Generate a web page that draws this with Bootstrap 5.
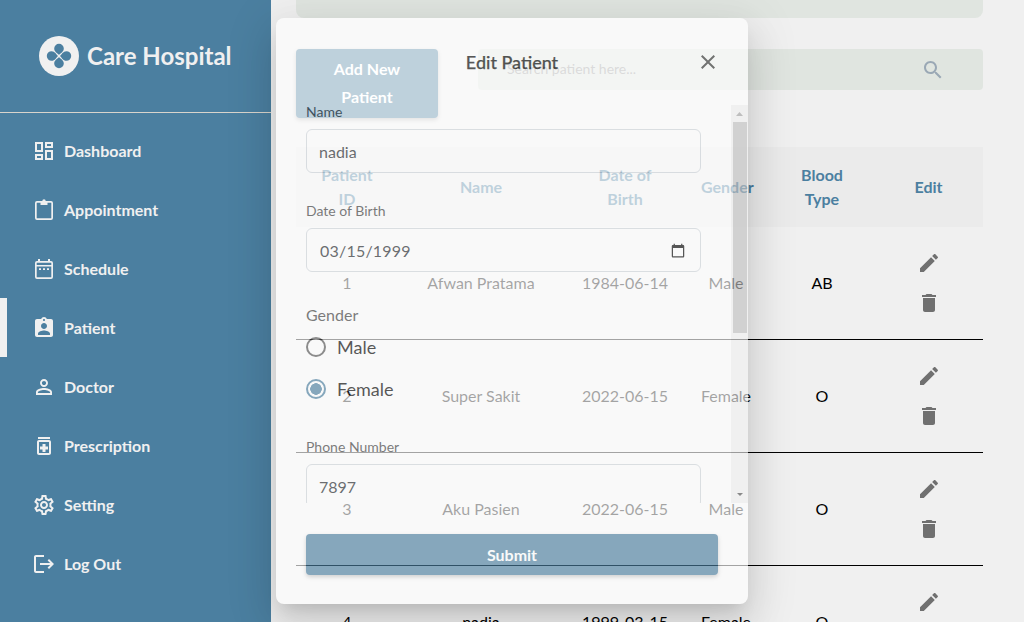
<!DOCTYPE html>
<html lang="en">
<head>
  <meta charset="UTF-8" />
  <meta name="viewport" content="width=device-width, initial-scale=1.0"/>
  <title>Care Hospital</title>
  <link rel="stylesheet" href="https://cdn.jsdelivr.net/npm/bootstrap@5.3.2/dist/css/bootstrap.min.css">
  <style>
    html, body { height: 100%; }
    body {
      background-color: #f0f0f0;
      color: #000;
      font-family: Lato, "Liberation Sans", sans-serif;
      font-size: 16px;
      overflow: hidden;
    }
    svg { fill: currentColor; flex-shrink: 0; }

    .side-bar { width: 271px; background-color: #4b7fa0; color: #f0f0f0; flex-shrink: 0; }
    .brand-row { height: 113px; padding-left: 39px; border-bottom: 1px solid #d9d4cc; }
    .brand-name { font-size: 24px; font-weight: 700; }
    .side-list { padding-top: 8px; }
    .side-link {
      height: 59px;
      padding-left: 25px;
      border-left: 7px solid transparent;
      color: #f0f0f0;
      font-weight: 700;
      text-decoration: none;
    }
    .side-link.active-link { border-left-color: #f0f0f0; }

    .main-area { padding: 0 41px 0 25px; min-width: 0; }
    .top-strip { height: 18px; background-color: #e0e5e0; border-radius: 0 0 8px 8px; margin-bottom: 31px; }
    .tool-row { height: 69px; margin-bottom: 29px; }
    .add-btn {
      width: 142px;
      height: 69px;
      padding: 5px 16px 7px;
      background-color: #4b7fa0;
      color: #fff;
      font-weight: 700;
      line-height: 28px;
      border: 0;
      border-radius: 4px;
      box-shadow: 0 2px 4px rgba(0, 0, 0, .25);
    }
    .search-box { height: 41px; margin-left: 40px; padding: 0 38px 0 27px; background-color: #e0e5e0; border-radius: 4px; color: #9aa8b5; }
    .search-input { background: transparent; border: 0; outline: 0; font-size: 14px; margin-bottom: 2px; }
    .search-input::placeholder { color: #9a9a9a; }

    .patient-table { table-layout: fixed; width: 687px; margin: 0; --bs-table-bg: transparent; --bs-table-color: #000; }
    .patient-table th {
      padding: 16px;
      background-color: #ebebeb;
      color: #4b7fa0;
      font-weight: 700;
      line-height: 24px;
      border: 0;
      text-align: center;
      vertical-align: middle;
    }
    .patient-table th:nth-child(4) { padding-left: 15px; }
    .patient-table th:last-child { padding-right: 20px; }
    .patient-table td {
      padding: 16px 8px;
      line-height: 24px;
      text-align: center;
      vertical-align: middle;
      border-bottom: 1px solid #000;
    }
    .patient-table td:last-child { padding-right: 12px; }
    .c-id { width: 102px; }
    .c-name { width: 166px; }
    .c-dob { width: 122px; }
    .c-gender { width: 80px; }
    .c-blood { width: 112px; }
    .icon-btn { display: block; margin: 0 auto; padding: 8px; width: 40px; height: 40px; border: 0; background: none; color: #707070; line-height: 0; }

    .edit-dialog {
      position: absolute;
      top: 18px;
      left: 276px;
      width: 472px;
      height: 586px;
      opacity: .64;
      background-color: #fff;
      border: 0;
      border-radius: 8px;
      box-shadow: 0 11px 15px -7px rgba(0, 0, 0, .2), 0 24px 38px 3px rgba(0, 0, 0, .14), 0 9px 46px 8px rgba(0, 0, 0, .12);
    }
    .edit-dialog .modal-header { height: 87px; padding: 0 28px; border: 0; flex-shrink: 0; }
    .header-spacer { width: 24px; }
    .edit-title { font-size: 18px; font-weight: 500; color: #000; margin: 2px 0 0; -webkit-text-stroke: .25px #000; }
    .x-btn { padding: 0; border: 0; background: none; color: #333; line-height: 0; }
    .scroll-part { height: 398px; overflow: hidden; flex-shrink: 0; }
    .form-part { width: 425px; padding-left: 30px; height: 398px; overflow: hidden; }
    .field-label { display: block; font-size: 14px; line-height: 15px; margin-top: -1px; margin-bottom: 10px; color: #3a3a3a; }
    .field-input {
      width: 395px;
      height: 44px;
      margin-bottom: 31px;
      padding: 8px 12px;
      font-family: Lato, "Liberation Sans", sans-serif;
      font-size: 16px;
      color: #212529;
      border-color: #ced4da;
      border-radius: 6px;
    }
    .field-input[type="date"] { padding: 9px 12px 7px 13px; letter-spacing: .2px; }
    .gender-label { line-height: 24px; color: #3a3a3a; margin-bottom: -1px; }
    .radio-row { height: 42px; margin: 0; padding: 0; gap: 11px; }
    .radio-row .form-check-input {
      float: none;
      width: 20px;
      height: 20px;
      margin: 0;
      flex-shrink: 0;
      background-color: #fff;
      border: 2px solid #555;
    }
    .radio-row .form-check-input:checked {
      background-image: radial-gradient(circle, #4b7fa0 0 5.5px, transparent 6px);
      border-color: #4b7fa0;
    }
    .radio-row .form-check-label { font-size: 18px; color: #000; }
    .radio-group { margin-bottom: 30px; }

    .bar-track { width: 17px; height: 398px; margin-left: auto; background-color: #f1f1f1; }
    .bar-arrow { height: 17px; color: #a3a3a3; }
    .bar-arrow.low-arrow { color: #505050; }
    .bar-thumb { width: 14px; height: 211px; margin: 0 auto; background-color: #c1c1c1; }

    .edit-dialog .modal-footer { display: block; padding: 31px 30px 29px; border: 0; }
    .submit-btn {
      display: block;
      width: 412px;
      height: 41px;
      margin: 0;
      padding: 6px 16px;
      background-color: #4b7fa0;
      color: #fff;
      font-weight: 700;
      line-height: 30px;
      border: 0;
      border-radius: 4px;
      box-shadow: 0 2px 4px rgba(0, 0, 0, .25);
    }
  </style>
</head>
<body class="d-flex">

<!-- Sidebar -->
<aside class="side-bar d-flex flex-column">
  <div class="brand-row d-flex align-items-center gap-2">
    <svg width="40" height="40" viewBox="-20 -20 40 40">
      <circle r="20" fill="#f0f0f0"/>
      <g fill="#4b7fa0">
        <path d="M0-.9C-1.4-2.6-4.8-4-4.8-7.4a4.8 4.8 0 0 1 9.6 0C4.8-4 1.4-2.6 0-.9z"/>
        <path transform="rotate(90)" d="M0-.9C-1.4-2.6-4.8-4-4.8-7.4a4.8 4.8 0 0 1 9.6 0C4.8-4 1.4-2.6 0-.9z"/>
        <path transform="rotate(180)" d="M0-.9C-1.4-2.6-4.8-4-4.8-7.4a4.8 4.8 0 0 1 9.6 0C4.8-4 1.4-2.6 0-.9z"/>
        <path transform="rotate(270)" d="M0-.9C-1.4-2.6-4.8-4-4.8-7.4a4.8 4.8 0 0 1 9.6 0C4.8-4 1.4-2.6 0-.9z"/>
      </g>
    </svg>
    <span class="brand-name">Care Hospital</span>
  </div>
  <nav class="side-list d-flex flex-column">
    <a href="#" class="side-link d-flex align-items-center gap-2">
      <svg width="24" height="24" viewBox="0 0 24 24"><path d="M19 5v2h-4V5h4M9 5v6H5V5h4m10 8v6h-4v-6h4M9 17v2H5v-2h4M21 3h-8v6h8V3zM11 3H3v10h8V3zm10 8h-8v10h8V11zm-10 4H3v6h8v-6z"/></svg>
      Dashboard
    </a>
    <a href="#" class="side-link d-flex align-items-center gap-2">
      <svg width="24" height="24" viewBox="0 0 24 24"><path fill-rule="evenodd" d="M5 3h14a2 2 0 0 1 2 2v15a2 2 0 0 1-2 2H5a2 2 0 0 1-2-2V5a2 2 0 0 1 2-2zm0 1.7a.3.3 0 0 0-.3.3v15c0 .17.13.3.3.3h14a.3.3 0 0 0 .3-.3V5a.3.3 0 0 0-.3-.3z"/><path d="M8.5 7V3h1.8a1.7 1.7 0 0 1 3.4 0h1.8v4z"/></svg>
      Appointment
    </a>
    <a href="#" class="side-link d-flex align-items-center gap-2">
      <svg width="24" height="24" viewBox="0 0 24 24"><path fill-rule="evenodd" d="M6 2h2v2h8V2h2v2h1a2 2 0 0 1 2 2v14a2 2 0 0 1-2 2H5a2 2 0 0 1-2-2V6a2 2 0 0 1 2-2h1zM4.7 9.5V20c0 .17.13.3.3.3h14a.3.3 0 0 0 .3-.3V9.5zm0-1.6h14.6V6a.3.3 0 0 0-.3-.3H5a.3.3 0 0 0-.3.3z"/><path d="M7 11.3h2v1.6H7zm4 0h2v1.6h-2zm4 0h2v1.6h-2z"/></svg>
      Schedule
    </a>
    <a href="#" class="side-link active-link d-flex align-items-center gap-2">
      <svg width="24" height="24" viewBox="0 0 24 24"><path d="M19 3h-4.18C14.4 1.84 13.3 1 12 1c-1.3 0-2.4.84-2.82 2H5c-1.1 0-2 .9-2 2v14c0 1.1.9 2 2 2h14c1.1 0 2-.9 2-2V5c0-1.1-.9-2-2-2zm-7 0c.55 0 1 .45 1 1s-.45 1-1 1-1-.45-1-1 .45-1 1-1zm0 4c1.66 0 3 1.34 3 3s-1.34 3-3 3-3-1.34-3-3 1.34-3 3-3zm6 12H6v-1.4c0-2 4-3.1 6-3.1s6 1.1 6 3.1V19z"/></svg>
      Patient
    </a>
    <a href="#" class="side-link d-flex align-items-center gap-2">
      <svg width="24" height="24" viewBox="0 0 24 24"><path d="M12 5.9c1.16 0 2.1.94 2.1 2.1s-.94 2.1-2.1 2.1S9.9 9.16 9.9 8s.94-2.1 2.1-2.1m0 9c2.97 0 6.1 1.46 6.1 2.1v1.1H5.9V17c0-.64 3.13-2.1 6.1-2.1M12 4C9.79 4 8 5.79 8 8s1.79 4 4 4 4-1.79 4-4-1.79-4-4-4zm0 9c-2.67 0-8 1.34-8 4v3h16v-3c0-2.66-5.33-4-8-4z"/></svg>
      Doctor
    </a>
    <a href="#" class="side-link d-flex align-items-center gap-2">
      <svg width="24" height="24" viewBox="0 0 24 24"><path d="M6 3h12v2H6zm11 3H7c-1.1 0-2 .9-2 2v11c0 1.1.9 2 2 2h10c1.1 0 2-.9 2-2V8c0-1.1-.9-2-2-2zm0 13H7V8h10v11zm-6.5-1h3v-2.5H16v-3h-2.5V10h-3v2.5H8v3h2.5z"/></svg>
      Prescription
    </a>
    <a href="#" class="side-link d-flex align-items-center gap-2">
      <svg width="24" height="24" viewBox="0 0 24 24"><path d="M19.43 12.98c.04-.32.07-.64.07-.98 0-.34-.03-.66-.07-.98l2.11-1.65c.19-.15.24-.42.12-.64l-2-3.46c-.09-.16-.26-.25-.44-.25-.06 0-.12.01-.17.03l-2.49 1c-.52-.4-1.08-.73-1.69-.98l-.38-2.65C14.46 2.18 14.25 2 14 2h-4c-.25 0-.46.18-.49.42l-.38 2.65c-.61.25-1.17.59-1.69.98l-2.49-1c-.06-.02-.12-.03-.18-.03-.17 0-.34.09-.43.25l-2 3.46c-.13.22-.07.49.12.64l2.11 1.65c-.04.32-.07.65-.07.98 0 .33.03.66.07.98l-2.11 1.65c-.19.15-.24.42-.12.64l2 3.46c.09.16.26.25.44.25.06 0 .12-.01.17-.03l2.49-1c.52.4 1.08.73 1.69.98l.38 2.65c.03.24.24.42.49.42h4c.25 0 .46-.18.49-.42l.38-2.65c.61-.25 1.17-.59 1.69-.98l2.49 1c.06.02.12.03.18.03.17 0 .34-.09.43-.25l2-3.46c.12-.22.07-.49-.12-.64l-2.11-1.65zm-1.98-1.71c.04.31.05.52.05.73 0 .21-.02.43-.05.73l-.14 1.13.89.7 1.08.84-.7 1.21-1.27-.51-1.04-.42-.9.68c-.43.32-.84.56-1.25.73l-1.06.43-.16 1.13-.2 1.35h-1.4l-.19-1.35-.16-1.13-1.06-.43c-.43-.18-.83-.41-1.23-.71l-.91-.7-1.06.43-1.27.51-.7-1.21 1.08-.84.89-.7-.14-1.13c-.03-.31-.05-.54-.05-.74s.02-.43.05-.73l.14-1.13-.89-.7-1.08-.84.7-1.21 1.27.51 1.04.42.9-.68c.43-.32.84-.56 1.25-.73l1.06-.43.16-1.13.2-1.35h1.39l.19 1.35.16 1.13 1.06.43c.43.18.83.41 1.23.71l.91.7 1.06-.43 1.27-.51.7 1.21-1.07.85-.89.7.14 1.13zM12 8c-2.21 0-4 1.79-4 4s1.79 4 4 4 4-1.79 4-4-1.79-4-4-4zm0 6c-1.1 0-2-.9-2-2s.9-2 2-2 2 .9 2 2-.9 2-2 2z"/></svg>
      Setting
    </a>
    <a href="#" class="side-link d-flex align-items-center gap-2">
      <svg width="24" height="24" viewBox="0 0 24 24"><path d="M17 7l-1.41 1.41L18.17 11H8v2h10.17l-2.58 2.58L17 17l5-5zM4 5h8V3H4c-1.1 0-2 .9-2 2v14c0 1.1.9 2 2 2h8v-2H4V5z"/></svg>
      Log Out
    </a>
  </nav>
</aside>

<!-- Main content -->
<main class="main-area flex-grow-1">
  <div class="top-strip"></div>
  <div class="tool-row d-flex align-items-start">
    <button class="add-btn flex-shrink-0">Add New Patient</button>
    <div class="search-box flex-grow-1 d-flex align-items-center justify-content-between">
      <input class="search-input flex-grow-1" type="text" placeholder="Search patient here...">
      <svg width="24" height="24" viewBox="0 0 24 24"><path d="M15.5 14h-.79l-.28-.27C15.41 12.59 16 11.11 16 9.5 16 5.91 13.09 3 9.5 3S3 5.91 3 9.5 5.91 16 9.5 16c1.61 0 3.09-.59 4.23-1.57l.27.28v.79l5 4.99L20.49 19l-4.99-5zm-6 0C7.01 14 5 11.99 5 9.5S7.01 5 9.5 5 14 7.01 14 9.5 11.99 14 9.5 14z"/></svg>
    </div>
  </div>

  <table class="table patient-table">
    <colgroup>
      <col class="c-id"><col class="c-name"><col class="c-dob"><col class="c-gender"><col class="c-blood"><col>
    </colgroup>
    <thead>
      <tr>
        <th>Patient ID</th>
        <th>Name</th>
        <th>Date of Birth</th>
        <th>Gender</th>
        <th class="px-4">Blood Type</th>
        <th>Edit</th>
      </tr>
    </thead>
    <tbody id="patientRows"></tbody>
  </table>
</main>

<!-- Edit dialog -->
<div class="modal-content edit-dialog">
  <div class="modal-header d-flex align-items-center justify-content-between">
    <span class="header-spacer"></span>
    <h5 class="edit-title">Edit Patient</h5>
    <button class="x-btn" aria-label="Close">
      <svg width="24" height="24" viewBox="0 0 24 24"><path d="M19 6.41L17.59 5 12 10.59 6.41 5 5 6.41 10.59 12 5 17.59 6.41 19 12 13.41 17.59 19 19 17.59 13.41 12z"/></svg>
    </button>
  </div>
  <div class="scroll-part d-flex">
    <form class="form-part">
      <label class="field-label">Name</label>
      <input class="form-control field-input" type="text" value="nadia">
      <label class="field-label">Date of Birth</label>
      <input class="form-control field-input" type="date" value="1999-03-15">
      <div class="gender-label">Gender</div>
      <div class="radio-group">
        <div class="form-check radio-row d-flex align-items-center">
          <input class="form-check-input" type="radio" name="gender" id="gMale">
          <label class="form-check-label" for="gMale">Male</label>
        </div>
        <div class="form-check radio-row d-flex align-items-center">
          <input class="form-check-input" type="radio" name="gender" id="gFemale" checked>
          <label class="form-check-label" for="gFemale">Female</label>
        </div>
      </div>
      <label class="field-label">Phone Number</label>
      <input class="form-control field-input" type="text" value="7897">
    </form>
    <div class="bar-track d-flex flex-column justify-content-between">
      <div>
        <div class="bar-arrow d-flex align-items-center justify-content-center">
          <svg width="7" height="4" viewBox="0 0 7 4"><path d="M3.5 0L7 4H0z"/></svg>
        </div>
        <div class="bar-thumb"></div>
      </div>
      <div class="bar-arrow low-arrow d-flex align-items-center justify-content-center">
        <svg width="6" height="3" viewBox="0 0 6 3"><path d="M0 0h6L3 3z"/></svg>
      </div>
    </div>
  </div>
  <div class="modal-footer">
    <button class="submit-btn">Submit</button>
  </div>
</div>

<script>
  const patients = [
    [1, 'Afwan Pratama', '1984-06-14', 'Male', 'AB'],
    [2, 'Super Sakit', '2022-06-15', 'Female', 'O'],
    [3, 'Aku Pasien', '2022-06-15', 'Male', 'O'],
    [4, 'nadia', '1999-03-15', 'Female', 'O']
  ];
  const editIcon = '<svg width="24" height="24" viewBox="0 0 24 24"><path d="M3 17.25V21h3.75L17.81 9.94l-3.75-3.75L3 17.25zM20.71 7.04c.39-.39.39-1.02 0-1.41l-2.34-2.34c-.39-.39-1.02-.39-1.41 0l-1.83 1.83 3.75 3.75 1.83-1.83z"/></svg>';
  const deleteIcon = '<svg width="24" height="24" viewBox="0 0 24 24"><path d="M6 19c0 1.1.9 2 2 2h8c1.1 0 2-.9 2-2V7H6v12zM19 4h-3.5l-1-1h-5l-1 1H5v2h14V4z"/></svg>';
  const body = document.getElementById('patientRows');
  patients.forEach(p => {
    const row = body.insertRow();
    row.innerHTML = p.map(v => `<td>${v}</td>`).join('') +
      `<td><button class="icon-btn">${editIcon}</button><button class="icon-btn">${deleteIcon}</button></td>`;
  });
</script>
<script src="https://cdn.jsdelivr.net/npm/bootstrap@5.3.2/dist/js/bootstrap.bundle.min.js"></script>
</body>
</html>
